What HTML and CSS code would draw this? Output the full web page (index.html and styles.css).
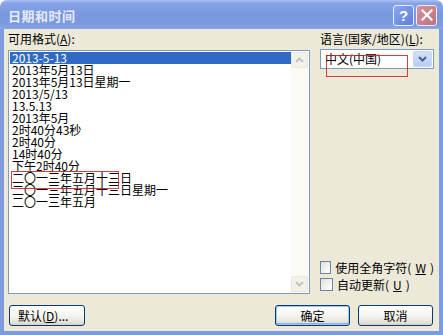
FILE: index.html
```html
<!DOCTYPE html>
<html lang="zh-CN">
<head>
    <meta charset="UTF-8">
    <title>日期和时间</title>
    <link rel="stylesheet" href="styles.css">
</head>
<body>
    <div class="window">
        <div class="titlebar">
            <span class="title">日期和时间</span>
            <div class="title-buttons">
                <div class="tb-btn help-btn">?</div>
                <div class="tb-btn close-btn">
                    <svg width="12" height="12" viewBox="0 0 12 12"><path d="M1.5 1.5 L10.5 10.5 M10.5 1.5 L1.5 10.5" stroke="#fff" stroke-width="2.2" stroke-linecap="square"/></svg>
                </div>
            </div>
        </div>

        <div class="client">
            <div class="main">
                <div class="left-col">
                    <div class="label">可用格式(<u>A</u>):</div>
                    <div class="listbox">
                        <div class="items">
                            <div class="item selected">2013-5-13</div>
                            <div class="item">2013年5月13日</div>
                            <div class="item">2013年5月13日星期一</div>
                            <div class="item">2013/5/13</div>
                            <div class="item">13.5.13</div>
                            <div class="item">2013年5月</div>
                            <div class="item">2时40分43秒</div>
                            <div class="item">2时40分</div>
                            <div class="item">14时40分</div>
                            <div class="item">下午2时40分</div>
                            <div class="item">二〇一三年五月十三日</div>
                            <div class="item">二〇一三年五月十三日星期一</div>
                            <div class="item">二〇一三年五月</div>
                        </div>
                        <div class="scrollbar">
                            <div class="sb-btn">
                                <svg width="9" height="6" viewBox="0 0 9 6"><path d="M1 5 L4.5 1.5 L8 5" fill="none" stroke="#c6c4b8" stroke-width="2"/></svg>
                            </div>
                            <div class="sb-track"></div>
                            <div class="sb-btn">
                                <svg width="9" height="6" viewBox="0 0 9 6"><path d="M1 1 L4.5 4.5 L8 1" fill="none" stroke="#c6c4b8" stroke-width="2"/></svg>
                            </div>
                        </div>
                        <div class="mark mark-list"></div>
                    </div>
                </div>

                <div class="right-col">
                    <div class="label">语言(国家/地区)(<u>L</u>):</div>
                    <div class="combo">
                        <span class="combo-text">中文(中国)</span>
                        <div class="combo-btn">
                            <svg width="9" height="6" viewBox="0 0 9 6"><path d="M1 1 L4.5 4.5 L8 1" fill="none" stroke="#4d6185" stroke-width="2"/></svg>
                        </div>
                        <div class="mark mark-combo"></div>
                    </div>
                    <div class="checks">
                        <label class="check-row"><span class="checkbox"></span>使用全角字符(<u>W</u>)</label>
                        <label class="check-row"><span class="checkbox"></span>自动更新(<u>U</u>)</label>
                    </div>
                </div>
            </div>

            <div class="button-row">
                <button class="btn btn-wide">默认(<u>D</u>)...</button>
                <div class="spacer"></div>
                <button class="btn btn-default">确定</button>
                <button class="btn">取消</button>
            </div>
        </div>
    </div>
</body>
</html>
```

FILE: styles.css
```css
:root {
    --frame-blue: #7f9be0;
    --face: #ece9d8;
    --list-border: #7f9db9;
    --select-blue: #316ac5;
}

body {
    margin: 0;
    background: #ffffff;
    font-family: "Noto Sans CJK SC", "SimSun", sans-serif;
    font-size: 12px;
    color: #000;
}

.window {
    width: 443px;
    height: 335px;
    display: flex;
    flex-direction: column;
    box-sizing: border-box;
}

.titlebar {
    height: 29px;
    flex: none;
    display: flex;
    align-items: center;
    justify-content: space-between;
    padding: 0 6px 0 8px;
    border-radius: 7px 7px 0 0;
    background: linear-gradient(#a9c0f2 0%, #86a2e5 12%, #7b98df 50%, #7d9ae0 85%, #8aa6e6 100%);
}

.title {
    color: #e4ecfb;
    font-weight: bold;
    font-size: 13px;
    letter-spacing: 0.5px;
    padding-top: 1px;
}

.title-buttons {
    display: flex;
    gap: 2px;
    padding-top: 1px;
}

.tb-btn {
    width: 19px;
    height: 19px;
    border: 1px solid #e8eefc;
    border-radius: 3px;
    display: flex;
    align-items: center;
    justify-content: center;
    color: #fff;
    font-family: "Liberation Sans", sans-serif;
    font-weight: bold;
    font-size: 15px;
}

.help-btn {
    background: linear-gradient(135deg, #8aa8ef, #5b7fdc);
}

.close-btn {
    background: linear-gradient(135deg, #d5949f, #c06f7e);
}

.client {
    flex: 1;
    display: flex;
    flex-direction: column;
    background: var(--face);
    border-left: 4px solid var(--frame-blue);
    border-right: 4px solid var(--frame-blue);
    border-bottom: 4px solid var(--frame-blue);
    padding: 3px 5px 5px 4px;
}

.main {
    display: flex;
    gap: 10px;
    height: 262px;
}

.left-col {
    width: 302px;
    display: flex;
    flex-direction: column;
    gap: 4px;
}

.right-col {
    width: 114px;
    display: flex;
    flex-direction: column;
    gap: 3px;
}

.label {
    height: 14px;
    line-height: 14px;
    white-space: nowrap;
}

.listbox {
    position: relative;
    flex: 1;
    display: flex;
    background: #fff;
    border: 1px solid var(--list-border);
    padding: 1px;
}

.items {
    flex: 1;
}

.item {
    height: 12px;
    line-height: 12px;
    padding-left: 2px;
    white-space: nowrap;
}

.item.selected {
    background: var(--select-blue);
    color: #fff;
}

.scrollbar {
    width: 17px;
    display: flex;
    flex-direction: column;
    background: #fbfaf5;
}

.sb-btn {
    height: 16px;
    box-sizing: border-box;
    border: 1px solid #e9e7dd;
    border-radius: 2px;
    background: #f2f1ea;
    display: flex;
    align-items: center;
    justify-content: center;
}

.sb-track {
    flex: 1;
}

.combo {
    position: relative;
    height: 20px;
    box-sizing: border-box;
    border: 1px solid var(--list-border);
    background: #fff;
    display: flex;
    align-items: center;
    padding: 1px;
}

.combo-text {
    flex: 1;
    padding-left: 3px;
    line-height: 16px;
}

.combo-btn {
    width: 19px;
    height: 16px;
    border-radius: 2px;
    background: linear-gradient(#d3e0fc, #b9cdf7);
    border: 1px solid #c6d5f8;
    box-sizing: border-box;
    display: flex;
    align-items: center;
    justify-content: center;
}

.mark {
    position: absolute;
    border: 1px solid rgba(205, 30, 30, 0.85);
    pointer-events: none;
}

.mark-list {
    left: 2px;
    top: 120px;
    width: 106px;
    height: 16px;
}

.mark-combo {
    left: 5px;
    top: 5px;
    width: 80px;
    height: 20px;
}

.checks {
    margin-top: auto;
    display: flex;
    flex-direction: column;
    padding-bottom: 1px;
}

.check-row {
    height: 17px;
    display: flex;
    align-items: center;
    gap: 4px;
    white-space: nowrap;
}

.checkbox {
    width: 13px;
    height: 13px;
    box-sizing: border-box;
    border: 1px solid #6f84a0;
    background: linear-gradient(135deg, #e0e0da, #ffffff);
}

.button-row {
    display: flex;
    gap: 8px;
    margin-top: 11px;
    padding: 0 1px;
}

.spacer {
    flex: 1;
}

.btn {
    width: 75px;
    height: 21px;
    padding: 0;
    font-family: inherit;
    font-size: 12px;
    color: #000;
    border: 1px solid #003c74;
    border-radius: 3px;
    background: linear-gradient(#ffffff 0%, #f4f3ee 55%, #e6e3d8 85%, #d6d0c5 100%);
}

.btn-wide {
    width: 76px;
    text-align: left;
    padding-left: 8px;
}

.btn-default {
    box-shadow: inset 0 0 0 1px #a8c4f3, inset 0 -1px 0 1px #8eaaee;
}
```
